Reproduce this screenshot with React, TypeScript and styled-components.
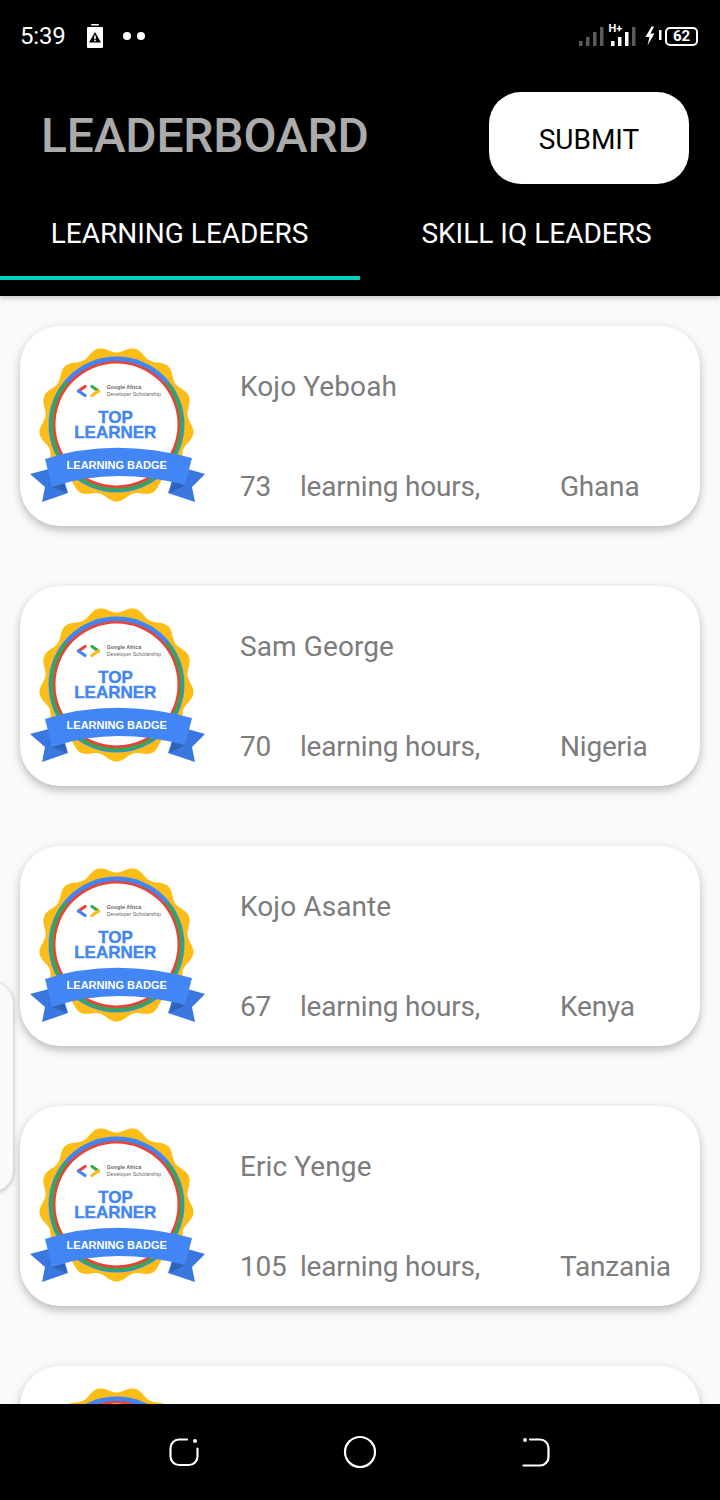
import React from "react";
import styled, { createGlobalStyle } from "styled-components";

const Global = createGlobalStyle`
  html, body { margin: 0; padding: 0; background: #000; }
  * { box-sizing: border-box; }
`;

const Screen = styled.div`
  position: relative;
  width: 720px;
  height: 1500px;
  display: flex;
  flex-direction: column;
  overflow: hidden;
  background: #fafafa;
  font-family: Roboto, "Liberation Sans", sans-serif;
`;

const Top = styled.header`
  position: relative;
  z-index: 2;
  flex: none;
  background: #000;
  padding-bottom: 16px;
  box-shadow: 0 2px 5px rgba(0, 0, 0, 0.22);
`;

const StatusBar = styled.div`
  height: 72px;
  display: flex;
  align-items: center;
  padding: 0 20px;
  color: #fff;
`;

const Clock = styled.span`
  font-size: 24px;
  letter-spacing: -0.2px;
  margin: 0 22px 0 0;
`;

const Dots = styled.span`
  display: flex;
  gap: 6px;
  margin-left: 20px;
`;

const Dot = styled.i`
  width: 8px;
  height: 8px;
  border-radius: 50%;
  background: #fff;
`;

const StatusRight = styled.div`
  margin-left: auto;
  margin-right: 2px;
  display: flex;
  align-items: center;
`;

const BatteryBox = styled.span`
  width: 33px;
  height: 19px;
  border: 2px solid #fff;
  border-radius: 5px;
  display: flex;
  align-items: center;
  justify-content: center;
  font-size: 15px;
  font-weight: 700;
  line-height: 1;
`;

const TitleRow = styled.div`
  height: 128px;
  display: flex;
  align-items: flex-start;
  justify-content: space-between;
  padding: 20px 31px 0 41px;
`;

const Title = styled.h1`
  margin: 16px 0 0;
  font-size: 48px;
  line-height: 56px;
  font-weight: 500;
  color: #ababab;
  letter-spacing: -0.2px;
`;

const SubmitButton = styled.button`
  width: 200px;
  height: 92px;
  border: 0;
  border-radius: 32px;
  background: #fff;
  color: #000;
  padding: 2px 0 0;
  font: 400 28px Roboto, sans-serif;
`;

const Tabs = styled.nav`
  display: grid;
  grid-template-columns: 1fr 1fr;
`;

const Tab = styled.div<{ $active?: boolean }>`
  height: 80px;
  display: flex;
  align-items: center;
  justify-content: center;
  padding: 0 ${(p) => (p.$active ? "1px" : "7px")} 10px 0;
  color: #fff;
  font-size: 28px;
  border-bottom: 4px solid ${(p) => (p.$active ? "#00d2be" : "transparent")};
`;

const List = styled.main`
  flex: 1;
  min-height: 0;
  overflow: hidden;
  display: flex;
  flex-direction: column;
  gap: 60px;
  padding: 30px 20px 0;
`;

const Card = styled.article`
  flex: none;
  height: 200px;
  display: flex;
  background: #fff;
  border-radius: 40px;
  box-shadow: 0 4px 10px rgba(0, 0, 0, 0.26);
`;

const BadgeBox = styled.div`
  flex: none;
  width: 220px;
  padding: 18px 0 0 8px;
`;

const CardBody = styled.div`
  flex: 1;
  display: flex;
  flex-direction: column;
  justify-content: space-between;
  padding: 41px 0 19px;
  color: #7c7c7c;
  font-size: 28px;
  line-height: 40px;
`;

const Name = styled.div`
  letter-spacing: 0.1px;
`;

const Stats = styled.div`
  display: grid;
  grid-template-columns: 60px 260px 1fr;
  letter-spacing: -0.2px;
`;

const SideHandle = styled.div`
  position: absolute;
  left: -30px;
  top: 982px;
  width: 43px;
  height: 210px;
  border-radius: 24px;
  background: #fafafa;
  box-shadow: 0 1px 5px rgba(0, 0, 0, 0.3);
`;

const BottomNav = styled.footer`
  position: relative;
  z-index: 2;
  flex: none;
  height: 96px;
  background: #000;
  display: grid;
  grid-template-columns: repeat(3, 176px);
  justify-content: center;
  align-items: center;
  justify-items: center;
`;

function waveCircle(cx: number, cy: number, r: number, amp: number, n: number) {
  const pts: string[] = [];
  for (let i = 0; i < 360; i++) {
    const a = (i / 360) * Math.PI * 2;
    const rad = r - amp * Math.cos(n * a);
    pts.push(`${(cx + rad * Math.sin(a)).toFixed(2)} ${(cy - rad * Math.cos(a)).toFixed(2)}`);
  }
  return "M" + pts.join("L") + "Z";
}

const gold = waveCircle(116.5, 424, 74.5, 3, 13);
const badgeFont = '"Liberation Sans", Arial, sans-serif';

const Badge = () => (
  <svg width="180" height="160" viewBox="28 344 180 160">
    <path d={gold} fill="#fdbd17" />
    <circle cx="116.5" cy="424.5" r="68" fill="#4285f4" />
    <path d="M66.7 382.7A65 65 0 1 0 166.3 382.7" fill="none" stroke="#34a853" strokeWidth="3.500" />
    <circle cx="116.5" cy="424.5" r="63.5" fill="#ea4335" />
    <circle cx="116.5" cy="424.5" r="61" fill="#fff" />
    <path d="M85 386.500L78.500 391" fill="none" stroke="#ea4335" strokeWidth="3.200" strokeLinecap="round" />
    <path d="M78.500 391L85 395.500" fill="none" stroke="#4285f4" strokeWidth="3.200" strokeLinecap="round" />
    <path d="M92 386.500L98.500 391" fill="none" stroke="#34a853" strokeWidth="3.200" strokeLinecap="round" />
    <path d="M98.500 391L92 395.500" fill="none" stroke="#fdbd17" strokeWidth="3.200" strokeLinecap="round" />
    <text x="106.700" y="389" fontSize="5.300" fontWeight="700" fill="#666" fontFamily={badgeFont}>Google Africa</text>
    <text x="106.700" y="396" fontSize="5.400" fill="#666" fontFamily={badgeFont}>Developer Scholarship</text>
    <text x="115.500" y="423" fontSize="17" fontWeight="700" fill="#4285f4" stroke="#4285f4" strokeWidth=".4" textAnchor="middle" fontFamily={badgeFont}>TOP</text>
    <text x="115.300" y="438" fontSize="17" fontWeight="700" fill="#4285f4" stroke="#4285f4" strokeWidth=".4" textAnchor="middle" fontFamily={badgeFont}>LEARNER</text>
    <path d="M30 474L60 466L68 493L42 502L45 487Z" fill="#3a78df" />
    <path d="M205 474L177 466L168 493L195 502L192 487Z" fill="#3a78df" />
    <path d="M52 487L67 493L64 482Z" fill="#2f62b8" />
    <path d="M185 485L170 493L172 482Z" fill="#2f62b8" />
    <path d="M45 459Q113 437 192 458L185 485Q113 466 52 487Z" fill="#4285f4" />
    <text x="116.700" y="468.500" fontSize="11" fontWeight="700" fill="#fff" textAnchor="middle" fontFamily={badgeFont}>LEARNING BADGE</text>
  </svg>
);

const BatteryAlert = () => (
  <svg width="16" height="24" viewBox="0 0 16 24">
    <rect x="4" y="0" width="8" height="1.500" rx=".7" fill="#fff" />
    <rect x="0" y="3" width="16" height="21" rx="1" fill="#fff" />
    <path d="M8 8L14 18.500H2Z" fill="#000" />
    <rect x="7.200" y="11.500" width="1.600" height="3.500" fill="#fff" />
    <rect x="7.200" y="15.700" width="1.600" height="1.500" fill="#fff" />
  </svg>
);

const Signals = () => {
  const dim = "#5a5a5a";
  const h = [5, 9, 14, 19];
  return (
    <svg width="66" height="30" viewBox="0 0 66 30">
      {h.map((v, i) => (
        <rect key={`a${i}`} x={i * 7} y={25 - v} width="3.500" height={v} fill={dim} />
      ))}
      {h.map((v, i) => (
        <rect key={`b${i}`} x={32 + i * 7} y={25 - v} width="3.500" height={v} fill={i === 3 ? dim : "#fff"} />
      ))}
      <text x="29.500" y="10.500" fontSize="11" fontWeight="700" fill="#fff" fontFamily="Roboto, sans-serif">H+</text>
    </svg>
  );
};

const Charge = () => (
  <svg width="20" height="20" viewBox="0 0 20 20">
    <path d="M6.500 0.500L0.500 11H4.500L2.500 19.500L9.500 7.500H5.500L9 0.500Z" fill="#fff" />
    <rect x="14" y="4" width="2.500" height="10" rx=".5" fill="#fff" />
  </svg>
);

const navStroke = { fill: "none", stroke: "#fff", strokeWidth: 2.200, strokeLinecap: "round" as const };

const NavLeft = () => (
  <svg width="32" height="32" viewBox="0 0 32 32">
    <path d="M19 3.500H11a8.500 8.500 0 0 0-8.500 8.500v8.500a8.500 8.500 0 0 0 8.500 8.500h10a8.500 8.500 0 0 0 8.500-8.500v-8" {...navStroke} />
    <circle cx="27" cy="5" r="2" fill="#fff" />
  </svg>
);

const NavHome = () => (
  <svg width="34" height="34" viewBox="0 0 34 34">
    <circle cx="17" cy="17" r="15" {...navStroke} />
  </svg>
);

const NavRight = () => (
  <svg width="32" height="32" viewBox="0 0 32 32">
    <path d="M10 3.500h10a8.500 8.500 0 0 1 8.500 8.500v9a8.500 8.500 0 0 1-8.500 8.500H3.500" {...navStroke} />
    <circle cx="5" cy="4" r="2" fill="#fff" />
  </svg>
);

const leaders = [
  { name: "Kojo Yeboah", hours: 73, country: "Ghana" },
  { name: "Sam George", hours: 70, country: "Nigeria" },
  { name: "Kojo Asante", hours: 67, country: "Kenya" },
  { name: "Eric Yenge", hours: 105, country: "Tanzania" },
  { name: "", hours: "", country: "" },
];

export default function App() {
  return (
    <Screen>
      <Global />
      <Top>
        <StatusBar>
          <Clock>5:39</Clock>
          <BatteryAlert />
          <Dots>
            <Dot />
            <Dot />
          </Dots>
          <StatusRight>
            <Signals />
            <Charge />
            <BatteryBox>62</BatteryBox>
          </StatusRight>
        </StatusBar>
        <TitleRow>
          <Title>LEADERBOARD</Title>
          <SubmitButton>SUBMIT</SubmitButton>
        </TitleRow>
        <Tabs>
          <Tab $active>LEARNING LEADERS</Tab>
          <Tab>SKILL IQ LEADERS</Tab>
        </Tabs>
      </Top>
      <List>
        {leaders.map((l, i) => (
          <Card key={i}>
            <BadgeBox>
              <Badge />
            </BadgeBox>
            <CardBody>
              <Name>{l.name}</Name>
              <Stats>
                <span>{l.hours}</span>
                <span>{l.name && "learning hours,"}</span>
                <span>{l.country}</span>
              </Stats>
            </CardBody>
          </Card>
        ))}
      </List>
      <SideHandle />
      <BottomNav>
        <NavLeft />
        <NavHome />
        <NavRight />
      </BottomNav>
    </Screen>
  );
}
